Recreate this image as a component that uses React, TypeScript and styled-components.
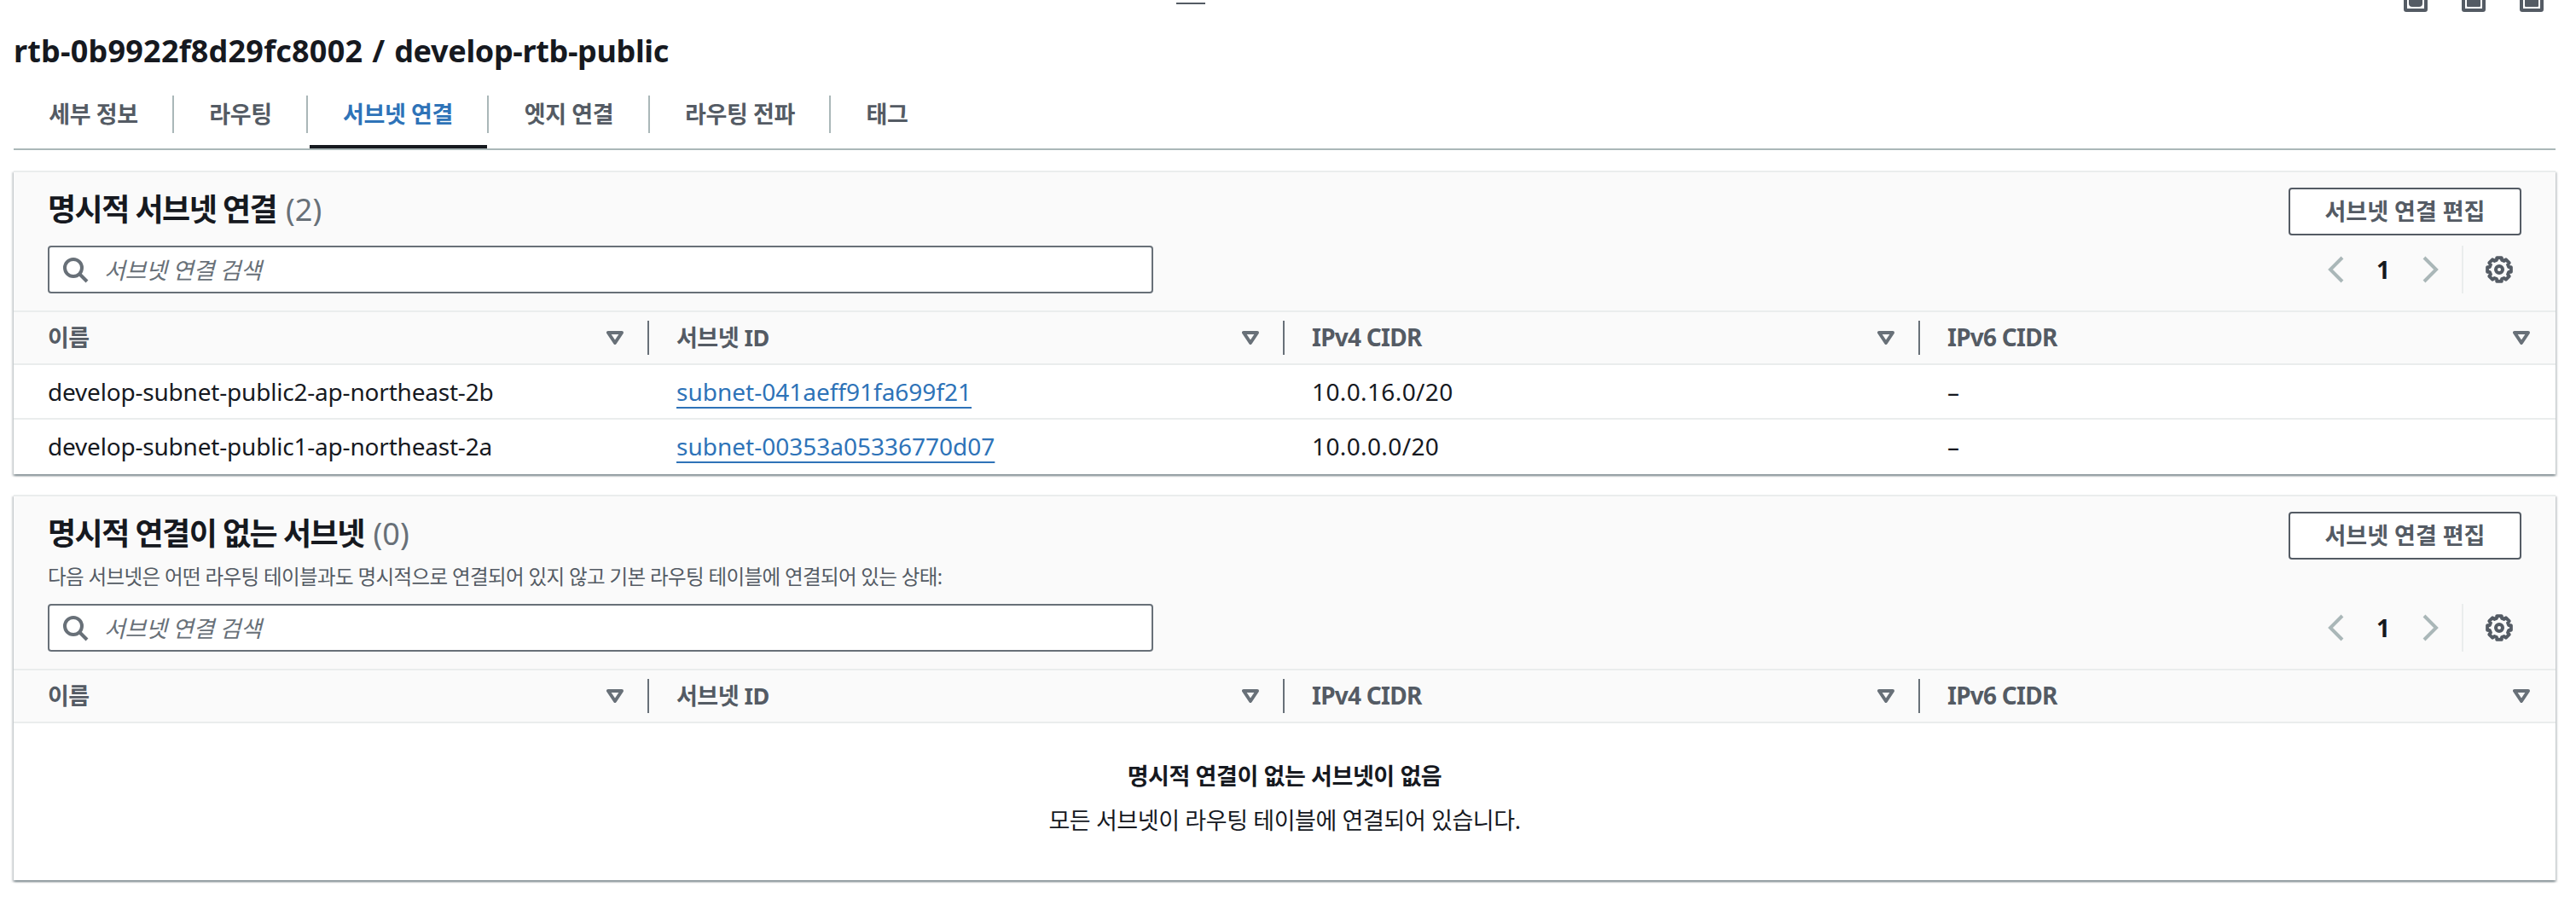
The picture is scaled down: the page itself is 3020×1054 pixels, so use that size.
import React from 'react';
import styled, { createGlobalStyle } from 'styled-components';

const GlobalStyle = createGlobalStyle`
  *, *::before, *::after { box-sizing: border-box; }
  body {
    margin: 0;
    background: #ffffff;
    color: #16191f;
    font-family: "Noto Sans", "Noto Sans CJK KR", sans-serif;
    font-size: 28px;
    overflow: hidden;
  }
  h1, h2, p { margin: 0; }
  svg { display: block; }
`;

const Page = styled.main`
  display: flex;
  flex-direction: column;
  height: 1054px;
  padding: 0 24px 0 16px;
  white-space: nowrap;
`;

const SplitBar = styled.div`
  display: grid;
  grid-template-columns: 1363px 34px 1fr;
  height: 14px;
  padding-right: 14px;
`;

const DragHandle = styled.div`
  grid-column: 2;
  height: 2px;
  margin-top: 3px;
  background: #545b64;
`;

const LayoutIcons = styled.div`
  display: flex;
  justify-content: flex-end;
  gap: 40px;
`;

const PageTitle = styled.h1`
  display: flex;
  gap: 11px;
  margin-top: 20px;
  font-size: 36px;
  line-height: 52px;
  font-weight: 700;
`;

const TitlePart = styled.span<{ $spacing: number }>`
  letter-spacing: ${(p) => p.$spacing}px;
`;

const TabList = styled.nav`
  display: flex;
  height: 90px;
  border-bottom: 2px solid #aab7b8;
`;

const Tab = styled.div<{ $width: number; $active?: boolean }>`
  display: flex;
  flex-direction: column;
  align-items: stretch;
  justify-content: space-between;
  width: ${(p) => p.$width}px;
  padding-top: 26px;
  color: ${(p) => (p.$active ? '#2e73b8' : '#545b64')};
`;

const TabLabel = styled.span`
  padding-left: 1px;
  border-right: 2px solid #aab7b8;
  line-height: 44px;
  font-size: 27px;
  font-weight: 700;
  letter-spacing: -0.4px;
  text-align: center;

  ${Tab}:last-child & { border-right-color: transparent; }
`;

const TabMarker = styled.span`
  height: 4px;
  margin: 0 2px;
  background: #16191f;
`;

const Panel = styled.section<{ $gap: number }>`
  margin-top: ${(p) => p.$gap}px;
  width: 2980px;
  border-top: 2px solid #eaeded;
  background: #ffffff;
  box-shadow: 0 2px 2px 0 rgba(0, 28, 36, 0.3), 2px 2px 2px 0 rgba(0, 28, 36, 0.15),
    -2px 2px 2px 0 rgba(0, 28, 36, 0.15);
`;

const PanelHeader = styled.header`
  display: flex;
  flex-direction: column;
  gap: 12px;
  padding: 18px 40px 20px;
  background: #fafafa;
  border-bottom: 2px solid #eaeded;
`;

const HeaderRow = styled.div`
  display: flex;
  justify-content: space-between;
  align-items: flex-start;
`;

const PanelTitle = styled.h2`
  font-size: 36px;
  line-height: 52px;
  font-weight: 700;
  letter-spacing: -1.55px;
`;

const Count = styled.span`
  margin-left: 3px;
  color: #687078;
  font-weight: 400;
  letter-spacing: 0;
`;

const Description = styled.p`
  margin-top: 4px;
  color: #545b64;
  font-size: 23.5px;
  line-height: 40px;
  letter-spacing: -0.62px;
`;

const Button = styled.button`
  width: 273px;
  height: 56px;
  padding: 0;
  border: 2px solid #545b64;
  border-radius: 4px;
  background: #ffffff;
  color: #545b64;
  font: inherit;
  font-size: 27px;
  font-weight: 700;
  letter-spacing: 0;
  line-height: 52px;
`;

const SearchBox = styled.label`
  display: flex;
  align-items: center;
  gap: 18px;
  width: 1296px;
  height: 56px;
  padding-left: 14px;
  border: 2px solid #687078;
  border-radius: 4px;
  background: #ffffff;
`;

const Placeholder = styled.span`
  padding-bottom: 2px;
  color: #687078;
  font-size: 27px;
  font-style: italic;
  letter-spacing: -0.4px;
`;

const Tools = styled.div`
  display: flex;
  align-items: center;
  height: 56px;
  padding-right: 10px;
`;

const PageNumber = styled.span`
  width: 80px;
  text-align: center;
  font-weight: 700;
`;

const Settings = styled.span`
  display: flex;
  align-items: center;
  height: 56px;
  margin-left: 20px;
  padding-left: 26px;
  border-left: 2px solid #eaeded;
`;

const TableRow = styled.div`
  display: grid;
  grid-template-columns: repeat(4, 1fr);
  height: 64px;
  border-bottom: 2px solid #eaeded;

  &:last-child { border-bottom-color: transparent; }
`;

const HeadRow = styled.div`
  display: grid;
  grid-template-columns: repeat(4, 1fr);
  height: 62px;
  background: #fafafa;
  border-bottom: 2px solid #eaeded;
`;

const HeadCell = styled.div`
  display: flex;
  align-items: center;
  justify-content: space-between;
  height: 40px;
  margin-top: 10px;
  padding: 0 28px 0 32px;
  border-right: 2px solid #687078;
  color: #545b64;

  &:first-child { padding-left: 40px; }
  &:last-child { border-right-color: transparent; }
`;

const HeadLabel = styled.span<{ $latin?: boolean }>`
  padding-bottom: 3px;
  font-size: ${(p) => (p.$latin ? 28 : 27)}px;
  font-weight: 700;
  letter-spacing: ${(p) => (p.$latin ? -0.75 : -0.5)}px;
`;

const Cell = styled.div<{ $spacing?: number }>`
  padding-left: 32px;
  line-height: 62px;
  letter-spacing: ${(p) => p.$spacing ?? 0}px;

  &:first-child { padding-left: 40px; }
`;

const Link = styled.a`
  color: #2e73b8;
  text-decoration: underline 2px;
  text-underline-offset: 7px;
  text-decoration-skip-ink: none;
`;

const Empty = styled.div`
  display: flex;
  flex-direction: column;
  align-items: center;
  height: 184px;
  padding-top: 36px;
  font-size: 27px;
  line-height: 52px;
  letter-spacing: -0.4px;
`;

const EmptyTitle = styled.strong`
  font-weight: 700;
`;

function PanelSizeIcon({ radius }: { radius: number }) {
  return (
    <svg width="28" height="14" viewBox="0 14 28 14">
      <rect x="2" y="2" width="24" height="24" rx="1" fill="none" stroke="#545b64" strokeWidth="4" />
      <rect x="6" y="8" width="16" height="14" rx={radius} fill="#545b64" />
    </svg>
  );
}

function SearchIcon() {
  return (
    <svg width="32" height="32" viewBox="0 0 16 16" fill="none" stroke="#687078" strokeWidth="2">
      <circle cx="7" cy="7" r="5" />
      <path d="m15 15-4.5-4.5" />
    </svg>
  );
}

function Chevron({ d }: { d: string }) {
  return (
    <svg width="32" height="32" viewBox="0 0 16 16" fill="none" stroke="#aab7b8" strokeWidth="2">
      <path d={d} />
    </svg>
  );
}

const gearPath = (() => {
  const points: string[] = [];
  for (let i = 0; i < 8; i += 1) {
    [
      [-11, 14.1],
      [11, 14.1],
      [15.5, 11.6],
      [29.5, 11.6],
    ].forEach(([deg, r]) => {
      const a = ((i * 45 + deg - 90) * Math.PI) / 180;
      points.push(`${(16 + r * Math.cos(a)).toFixed(2)} ${(16 + r * Math.sin(a)).toFixed(2)}`);
    });
  }
  return `M${points.join('L')}Z`;
})();

function GearIcon() {
  return (
    <svg width="32" height="32" viewBox="0 0 32 32" fill="none" stroke="#545b64" strokeWidth="4">
      <path d={gearPath} strokeLinejoin="round" />
      <circle cx="16" cy="16" r="4" />
    </svg>
  );
}

function SortIcon() {
  return (
    <svg width="20" height="16" viewBox="0 0 20 16">
      <path d="M2 2h16l-8 12z" fill="none" stroke="#687078" strokeWidth="4" strokeLinejoin="round" />
    </svg>
  );
}

const tabs = [
  { label: '세부 정보', width: 188 },
  { label: '라우팅', width: 157 },
  { label: '서브넷 연결', width: 212, active: true },
  { label: '엣지 연결', width: 189 },
  { label: '라우팅 전파', width: 212 },
  { label: '태그', width: 133 },
];

const columns = [
  { label: '이름' },
  { label: '서브넷 ID' },
  { label: 'IPv4 CIDR', latin: true },
  { label: 'IPv6 CIDR', latin: true },
];

const subnets = [
  { name: 'develop-subnet-public2-ap-northeast-2b', id: 'subnet-041aeff91fa699f21', v4: '10.0.16.0/20' },
  { name: 'develop-subnet-public1-ap-northeast-2a', id: 'subnet-00353a05336770d07', v4: '10.0.0.0/20' },
];

interface SubnetPanelProps {
  title: string;
  count: number;
  description?: string;
  gap: number;
  children: React.ReactNode;
}

function SubnetPanel({ title, count, description, gap, children }: SubnetPanelProps) {
  return (
    <Panel $gap={gap}>
      <PanelHeader>
        <HeaderRow>
          <div>
            <PanelTitle>
              {title} <Count>({count})</Count>
            </PanelTitle>
            {description && <Description>{description}</Description>}
          </div>
          <Button>서브넷 연결 편집</Button>
        </HeaderRow>
        <HeaderRow>
          <SearchBox>
            <SearchIcon />
            <Placeholder>서브넷 연결 검색</Placeholder>
          </SearchBox>
          <Tools>
            <Chevron d="M12 1 5 8l7 7" />
            <PageNumber>1</PageNumber>
            <Chevron d="m4 1 7 7-7 7" />
            <Settings>
              <GearIcon />
            </Settings>
          </Tools>
        </HeaderRow>
      </PanelHeader>
      <HeadRow>
        {columns.map((column) => (
          <HeadCell key={column.label}>
            <HeadLabel $latin={column.latin}>{column.label}</HeadLabel>
            <SortIcon />
          </HeadCell>
        ))}
      </HeadRow>
      {children}
    </Panel>
  );
}

export default function App() {
  return (
    <Page>
      <GlobalStyle />
      <SplitBar>
        <DragHandle />
        <LayoutIcons>
          <PanelSizeIcon radius={4} />
          <PanelSizeIcon radius={1} />
          <PanelSizeIcon radius={1} />
        </LayoutIcons>
      </SplitBar>
      <PageTitle>
        <TitlePart $spacing={0.2}>rtb-0b9922f8d29fc8002</TitlePart>
        <TitlePart $spacing={0}>/</TitlePart>
        <TitlePart $spacing={-0.35}>develop-rtb-public</TitlePart>
      </PageTitle>
      <TabList>
        {tabs.map((tab) => (
          <Tab key={tab.label} $width={tab.width} $active={tab.active}>
            <TabLabel>{tab.label}</TabLabel>
            {tab.active && <TabMarker />}
          </Tab>
        ))}
      </TabList>
      <SubnetPanel title="명시적 서브넷 연결" count={2} gap={24}>
        <div>
          {subnets.map((subnet) => (
            <TableRow key={subnet.id}>
              <Cell $spacing={-0.2}>{subnet.name}</Cell>
              <Cell>
                <Link>{subnet.id}</Link>
              </Cell>
              <Cell $spacing={0.38}>{subnet.v4}</Cell>
              <Cell>–</Cell>
            </TableRow>
          ))}
        </div>
      </SubnetPanel>
      <SubnetPanel
        title="명시적 연결이 없는 서브넷"
        count={0}
        description="다음 서브넷은 어떤 라우팅 테이블과도 명시적으로 연결되어 있지 않고 기본 라우팅 테이블에 연결되어 있는 상태:"
        gap={24}
      >
        <Empty>
          <EmptyTitle>명시적 연결이 없는 서브넷이 없음</EmptyTitle>
          <span>모든 서브넷이 라우팅 테이블에 연결되어 있습니다.</span>
        </Empty>
      </SubnetPanel>
    </Page>
  );
}
